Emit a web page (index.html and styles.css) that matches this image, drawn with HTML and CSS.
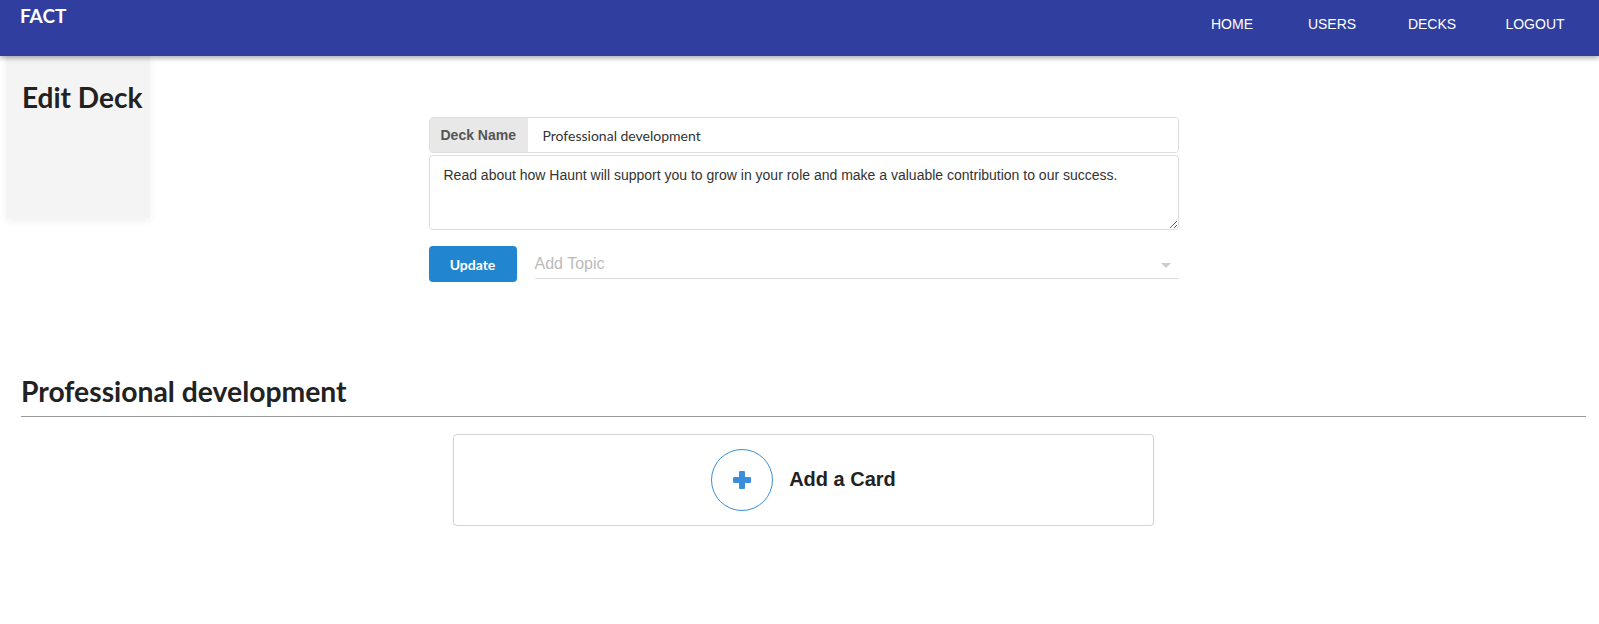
FILE: index.html
```html
<!DOCTYPE html>
<html>
<head>
<meta charset="utf-8">
<link rel="stylesheet" href="styles.css">
</head>
<body>
<nav class="navbar">
  <a class="brand" href="#">FACT</a>
  <ul class="nav-links">
    <li><a href="#">HOME</a></li>
    <li><a href="#">USERS</a></li>
    <li><a href="#">DECKS</a></li>
    <li><a href="#">LOGOUT</a></li>
  </ul>
</nav>
<main class="page">
  <section class="top">
    <aside class="sidebar">
      <h1 class="sidebar-title">Edit Deck</h1>
    </aside>
    <form class="deck-form">
      <div class="input-group">
        <span class="addon">Deck Name</span>
        <input class="name-input" type="text" value="Professional development">
      </div>
      <textarea class="desc">Read about how Haunt will support you to grow in your role and make a valuable contribution to our success.</textarea>
      <div class="actions">
        <button type="button" class="btn-update">Update</button>
        <div class="topic-select">
          <span class="placeholder">Add Topic</span>
          <span class="caret"></span>
        </div>
      </div>
    </form>
    <div></div>
  </section>
  <h2 class="deck-title">Professional development</h2>
  <hr class="rule">
  <div class="card-wrap">
    <div class="add-card">
      <span class="plus-circle">
        <svg width="20" height="20" viewBox="0 0 20 20"><rect x="7" y="1" width="6" height="18" rx="1.2" fill="#3a8edb"/><rect x="1" y="7" width="18" height="6" rx="1.2" fill="#3a8edb"/></svg>
      </span>
      <span class="add-label">Add a Card</span>
    </div>
  </div>
</main>
</body>
</html>
```

FILE: styles.css
```css
* { box-sizing: border-box; }
html, body { margin: 0; padding: 0; background: #fff; }
body { font-family: "Liberation Sans", Arial, sans-serif; color: #333; }

.navbar {
  height: 56px;
  background: #303f9f;
  display: flex;
  justify-content: space-between;
  box-shadow: 0 2px 5px rgba(0,0,0,0.35);
  position: relative;
  z-index: 2;
}
.brand {
  font-family: Lato, sans-serif;
  font-weight: 700;
  font-size: 19px;
  color: #fff;
  text-decoration: none;
  padding: 4px 0 0 20px;
  line-height: 23px;
}
.nav-links {
  list-style: none;
  margin: 0;
  padding: 0 11px 0 0;
  display: flex;
}
.nav-links li { width: 100px; text-align: center; }
.nav-links li:last-child { width: 106px; }
.nav-links a {
  color: #fff;
  text-decoration: none;
  font-size: 14px;
  line-height: 48px;
  display: block;
}

.page { padding: 0 13px 0 21px; }

.top {
  display: grid;
  grid-template-columns: 1fr 750px 1fr;
  align-items: start;
}
.sidebar {
  margin-left: -15px;
  width: 144px;
  height: 162px;
  background: #f4f4f4;
  box-shadow: 0 3px 8px rgba(0,0,0,0.06);
  padding: 25px 0 0 16px;
}
.sidebar-title {
  margin: 0;
  font-family: Lato, sans-serif;
  font-weight: 700;
  font-size: 28px;
  line-height: 1.2;
  color: #222;
}

.deck-form { margin: 61px 0 0; }
.input-group {
  display: flex;
  height: 36px;
  border: 1px solid #ddd;
  border-radius: 4px;
  overflow: hidden;
}
.addon {
  width: 98px;
  background: #e8e8e8;
  color: #555;
  font-weight: 700;
  font-size: 14px;
  display: flex;
  align-items: center;
  padding-left: 11px;
}
.name-input {
  flex: 1;
  border: 0;
  outline: none;
  font-family: Lato, sans-serif;
  font-size: 14px;
  color: #333;
  padding: 0 15px;
}
.desc {
  display: block;
  width: 100%;
  height: 75px;
  margin-top: 2px;
  border: 1px solid #ddd;
  border-radius: 4px;
  padding: 9px 14px;
  font-family: "Liberation Sans", Arial, sans-serif;
  font-size: 14px;
  line-height: 20px;
  color: #333;
  resize: vertical;
}
.actions {
  display: flex;
  gap: 18px;
  margin-top: 16px;
  align-items: flex-start;
}
.btn-update {
  width: 88px;
  height: 36px;
  border: 0;
  border-radius: 4px;
  background: #2185d0;
  color: #fff;
  font-family: Lato, sans-serif;
  font-weight: 700;
  font-size: 14px;
}
.topic-select {
  flex: 1;
  height: 33px;
  border-bottom: 1px solid #ddd;
  display: flex;
  align-items: center;
  justify-content: space-between;
  padding-top: 3px;
}
.placeholder { color: #bbb; font-size: 16px; }
.caret {
  width: 0; height: 0;
  border-left: 5px solid transparent;
  border-right: 5px solid transparent;
  border-top: 5px solid #ccc;
  margin-right: 8px;
  margin-top: 4px;
}

.deck-title {
  margin: 93px 0 0;
  font-family: Lato, sans-serif;
  font-weight: 700;
  font-size: 28.3px;
  line-height: 1.2;
  color: #222;
}
.rule {
  margin: 7px 0 0;
  border: 0;
  border-top: 1px solid #999;
}
.card-wrap { display: flex; justify-content: center; padding-top: 17px; }
.add-card {
  width: 701px;
  height: 92px;
  border: 1px solid #d4d4d4;
  border-radius: 4px;
  box-shadow: 0 1px 2px rgba(0,0,0,0.08);
  display: flex;
  align-items: center;
  justify-content: center;
  gap: 16px;
}
.plus-circle {
  width: 62px;
  height: 62px;
  border: 1px solid #3a8edb;
  border-radius: 50%;
  display: flex;
  align-items: center;
  justify-content: center;
}
.add-label {
  font-weight: 700;
  font-size: 20px;
  color: #222;
}
```
